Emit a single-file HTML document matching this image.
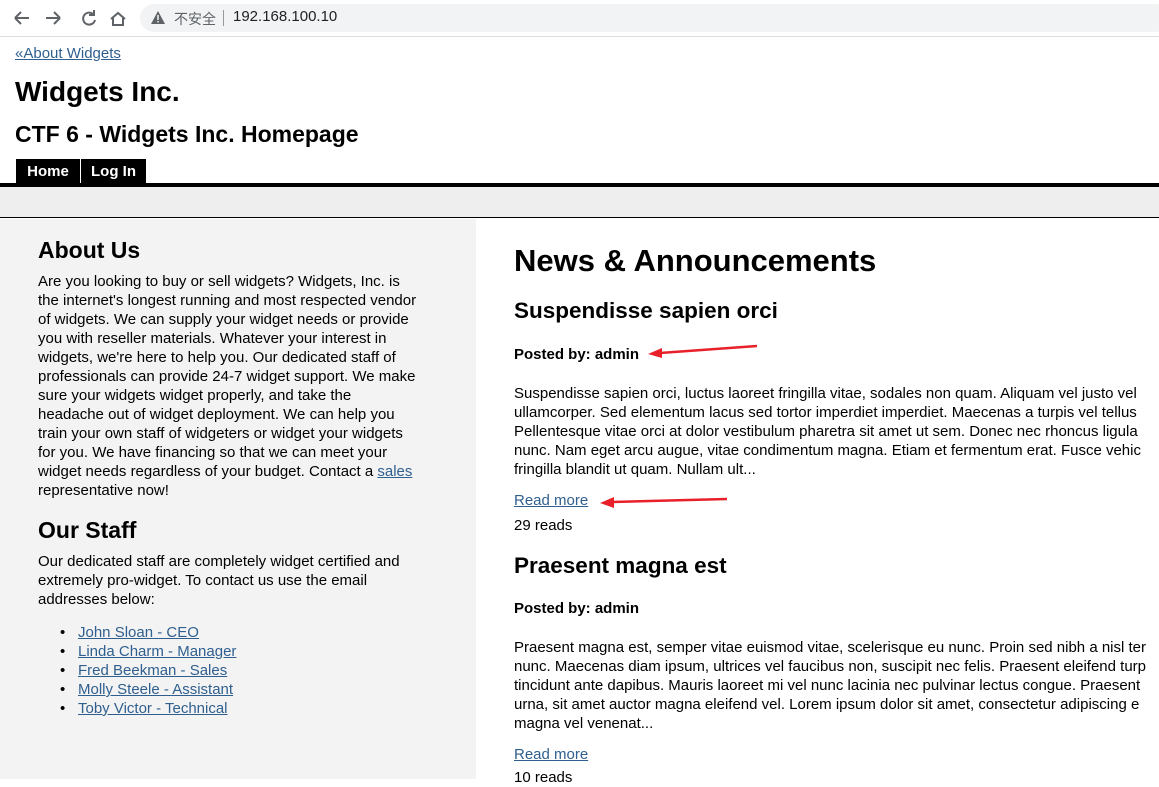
<!DOCTYPE html>
<html><head><meta charset="utf-8"><style>
*{margin:0;padding:0;box-sizing:border-box}
html,body{width:1159px;height:777px;overflow:hidden;background:#fff;font-family:"Liberation Sans","Noto Sans CJK SC",sans-serif;color:#000}
.chrome{position:absolute;left:0;top:0;width:1159px;height:37px;background:#fff;border-bottom:1px solid #ddd}
.pill{position:absolute;left:140px;top:4px;width:1030px;height:28px;border-radius:14px;background:#f1f3f4}
.url{position:absolute;left:233px;top:8px;font-size:15px;color:#202124}
.ns{position:absolute;left:174px;top:9px;font-size:14px;color:#5f6368;font-family:"Noto Sans CJK SC",sans-serif}
.sep{position:absolute;left:223px;top:10px;width:1px;height:16px;background:#999}
.abs{position:absolute;white-space:nowrap}
a{color:#2f5f8f;text-decoration:underline}
.t{font-size:15px;line-height:19px}
.b{font-weight:bold}
</style></head><body>
<div class="chrome">
<svg class="abs" style="left:12px;top:9px" width="120" height="20" viewBox="0 0 120 20" fill="none" stroke="#5f6368" stroke-width="2">
<path d="M3 9h14M3 9l6-6M3 9l6 6"/>
<path d="M34 9h14M48 9l-6-6M48 9l-6 6"/>
<path d="M81 5a6 6 0 1 0 2 6"/><path d="M82 1v5h-5" />
<path d="M99 10l7-6 7 6M101 9v7h10V9"/>
</svg>
<div class="pill"></div>
<svg class="abs" style="left:151px;top:11px" width="14" height="13"><path d="M7 0L14 13H0Z" fill="#5f6368"/><rect x="6.3" y="4" width="1.4" height="5" fill="#fff"/><rect x="6.3" y="10" width="1.4" height="1.4" fill="#fff"/></svg>
<div class="ns">不安全</div><div class="sep"></div>
<div class="url">192.168.100.10</div>
</div>

<a class="abs t" style="left:15px;top:44px">«About Widgets</a>
<div class="abs b" style="left:15px;top:76px;font-size:28px">Widgets Inc.</div>
<div class="abs b" style="left:15px;top:121px;font-size:23px">CTF 6 - Widgets Inc. Homepage</div>
<div class="abs" style="left:16px;top:159px;width:64px;height:25px;background:#000;color:#fff;font-weight:bold;font-size:15px;text-align:center;line-height:26px">Home</div>
<div class="abs" style="left:81px;top:159px;width:65px;height:25px;background:#000;color:#fff;font-weight:bold;font-size:15px;text-align:center;line-height:26px">Log In</div>
<div class="abs" style="left:0;top:183px;width:1159px;height:4px;background:#000"></div>
<div class="abs" style="left:0;top:187px;width:1159px;height:31px;background:#eee;border-bottom:1px solid #000"></div>
<div class="abs" style="left:0;top:219px;width:476px;height:560px;background:#f3f3f3"></div>

<div class="abs b" style="left:38px;top:237px;font-size:23px">About Us</div>
<div class="abs t" style="left:38px;top:272px">Are you looking to buy or sell widgets? Widgets, Inc. is<br>the internet's longest running and most respected vendor<br>of widgets. We can supply your widget needs or provide<br>you with reseller materials. Whatever your interest in<br>widgets, we're here to help you. Our dedicated staff of<br>professionals can provide 24-7 widget support. We make<br>sure your widgets widget properly, and take the<br>headache out of widget deployment. We can help you<br>train your own staff of widgeters or widget your widgets<br>for you. We have financing so that we can meet your<br>widget needs regardless of your budget. Contact a <a>sales</a><br>representative now!</div>
<div class="abs b" style="left:38px;top:517px;font-size:23px">Our Staff</div>
<div class="abs t" style="left:38px;top:552px">Our dedicated staff are completely widget certified and<br>extremely pro-widget. To contact us use the email<br>addresses below:</div>
<div class="abs t" style="left:78px;top:623px"><a>John Sloan - CEO</a><br><a>Linda Charm - Manager</a><br><a>Fred Beekman - Sales</a><br><a>Molly Steele - Assistant</a><br><a>Toby Victor - Technical</a></div>
<div class="abs" style="left:60px;top:623px;font-size:15px;line-height:19px;color:#000">•<br>•<br>•<br>•<br>•</div>

<div class="abs b" style="left:514px;top:243px;font-size:31px">News &amp; Announcements</div>
<div class="abs b" style="left:514px;top:298px;font-size:22.5px">Suspendisse sapien orci</div>
<div class="abs b t" style="left:514px;top:345px;font-size:15px">Posted by: admin</div>
<div class="abs t" style="left:514px;top:384px">Suspendisse sapien orci, luctus laoreet fringilla vitae, sodales non quam. Aliquam vel justo vel<br>ullamcorper. Sed elementum lacus sed tortor imperdiet imperdiet. Maecenas a turpis vel tellus<br>Pellentesque vitae orci at dolor vestibulum pharetra sit amet ut sem. Donec nec rhoncus ligula<br>nunc. Nam eget arcu augue, vitae condimentum magna. Etiam et fermentum erat. Fusce vehic<br>fringilla blandit ut quam. Nullam ult...</div>
<a class="abs t" style="left:514px;top:491px">Read more</a>
<div class="abs t" style="left:514px;top:516px">29 reads</div>
<div class="abs b" style="left:514px;top:553px;font-size:22.5px">Praesent magna est</div>
<div class="abs b t" style="left:514px;top:599px;font-size:15px">Posted by: admin</div>
<div class="abs t" style="left:514px;top:638px">Praesent magna est, semper vitae euismod vitae, scelerisque eu nunc. Proin sed nibh a nisl ter<br>nunc. Maecenas diam ipsum, ultrices vel faucibus non, suscipit nec felis. Praesent eleifend turp<br>tincidunt ante dapibus. Mauris laoreet mi vel nunc lacinia nec pulvinar lectus congue. Praesent<br>urna, sit amet auctor magna eleifend vel. Lorem ipsum dolor sit amet, consectetur adipiscing e<br>magna vel venenat...</div>
<a class="abs t" style="left:514px;top:745px">Read more</a>
<div class="abs t" style="left:514px;top:768px">10 reads</div>

<svg class="abs" style="left:0;top:0" width="1159" height="777">
<g stroke="#e8202a" stroke-width="2.5" fill="#e8202a">
<line x1="757" y1="346" x2="660" y2="353"/><path d="M648 354l14-6v10z" stroke="none"/>
<line x1="727" y1="499" x2="612" y2="502"/><path d="M600 503l14-6v11z" stroke="none"/>
</g></svg>
</body></html>
